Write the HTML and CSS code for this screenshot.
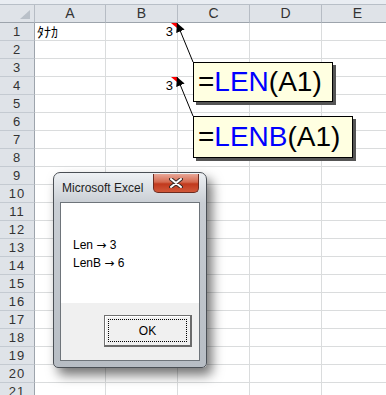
FILE: index.html
```html
<!DOCTYPE html>
<html lang="ja">
<head>
    <meta charset="UTF-8">
    <title>LEN / LENB</title>
    <link rel="stylesheet" href="styles.css">
</head>
<body>
    <div class="topbar"></div>

    <!-- Planilha -->
    <div class="sheet">
        <div class="hd corner"><span class="selall"></span></div>
        <div class="hd">A</div><div class="hd">B</div><div class="hd">C</div><div class="hd">D</div><div class="hd">E</div>

        <div class="rn">1</div><div class="c kana">ﾀﾅｶ</div><div class="c num note">3</div><div class="c"></div><div class="c"></div><div class="c"></div>
        <div class="rn">2</div><div class="c"></div><div class="c"></div><div class="c"></div><div class="c"></div><div class="c"></div>
        <div class="rn">3</div><div class="c"></div><div class="c"></div><div class="c"></div><div class="c"></div><div class="c"></div>
        <div class="rn">4</div><div class="c"></div><div class="c num note">3</div><div class="c"></div><div class="c"></div><div class="c"></div>
        <div class="rn">5</div><div class="c"></div><div class="c"></div><div class="c"></div><div class="c"></div><div class="c"></div>
        <div class="rn">6</div><div class="c"></div><div class="c"></div><div class="c"></div><div class="c"></div><div class="c"></div>
        <div class="rn">7</div><div class="c"></div><div class="c"></div><div class="c"></div><div class="c"></div><div class="c"></div>
        <div class="rn">8</div><div class="c"></div><div class="c"></div><div class="c"></div><div class="c"></div><div class="c"></div>
        <div class="rn">9</div><div class="c"></div><div class="c"></div><div class="c"></div><div class="c"></div><div class="c"></div>
        <div class="rn">10</div><div class="c"></div><div class="c"></div><div class="c"></div><div class="c"></div><div class="c"></div>
        <div class="rn">11</div><div class="c"></div><div class="c"></div><div class="c"></div><div class="c"></div><div class="c"></div>
        <div class="rn">12</div><div class="c"></div><div class="c"></div><div class="c"></div><div class="c"></div><div class="c"></div>
        <div class="rn">13</div><div class="c"></div><div class="c"></div><div class="c"></div><div class="c"></div><div class="c"></div>
        <div class="rn">14</div><div class="c"></div><div class="c"></div><div class="c"></div><div class="c"></div><div class="c"></div>
        <div class="rn">15</div><div class="c"></div><div class="c"></div><div class="c"></div><div class="c"></div><div class="c"></div>
        <div class="rn">16</div><div class="c"></div><div class="c"></div><div class="c"></div><div class="c"></div><div class="c"></div>
        <div class="rn">17</div><div class="c"></div><div class="c"></div><div class="c"></div><div class="c"></div><div class="c"></div>
        <div class="rn">18</div><div class="c"></div><div class="c"></div><div class="c"></div><div class="c"></div><div class="c"></div>
        <div class="rn">19</div><div class="c"></div><div class="c"></div><div class="c"></div><div class="c"></div><div class="c"></div>
        <div class="rn">20</div><div class="c"></div><div class="c"></div><div class="c"></div><div class="c"></div><div class="c"></div>
        <div class="rn">21</div><div class="c"></div><div class="c"></div><div class="c"></div><div class="c"></div><div class="c"></div>
    </div>

    <!-- Setas dos comentários -->
    <svg class="arrows" width="386" height="395">
        <defs>
            <marker id="head" viewBox="0 0 10 10" refX="10" refY="5" markerWidth="9" markerHeight="9" markerUnits="userSpaceOnUse" orient="auto">
                <path d="M0 0 L10 5 L0 10 z" fill="#000"/>
            </marker>
        </defs>
        <line x1="193" y1="62" x2="177" y2="23" stroke="#000" stroke-width="1" marker-end="url(#head)"/>
        <line x1="193" y1="116" x2="177" y2="77" stroke="#000" stroke-width="1" marker-end="url(#head)"/>
    </svg>

    <!-- Comentários -->
    <div class="comment c1"><span class="op">=</span><span class="fn">LEN</span><span class="op">(A1)</span></div>
    <div class="comment c2"><span class="op">=</span><span class="fn">LENB</span><span class="op">(A1)</span></div>

    <!-- Caixa de mensagem -->
    <div class="dialog">
        <div class="titlebar">
            <span class="title">Microsoft Excel</span>
            <span class="close">
                <svg width="14" height="10" viewBox="0 0 14 10">
                    <path d="M2 1 L12 9 M12 1 L2 9" stroke="#3a2a26" stroke-width="4" stroke-linecap="round"/>
                    <path d="M2 1 L12 9 M12 1 L2 9" stroke="#fff" stroke-width="2" stroke-linecap="round"/>
                </svg>
            </span>
        </div>
        <div class="client">
            <div class="msg">
                <p>Len <span class="arr">→</span> 3</p>
                <p>LenB <span class="arr">→</span> 6</p>
            </div>
            <div class="actions">
                <button class="okbtn"><span>OK</span></button>
            </div>
        </div>
    </div>
</body>
</html>
```

FILE: styles.css
```css
* {
    margin: 0;
    padding: 0;
    box-sizing: border-box;
}

body {
    width: 386px;
    height: 395px;
    overflow: hidden;
    position: relative;
    background: #fff;
    font-family: 'Liberation Sans', 'DejaVu Sans', 'Noto Sans CJK JP', sans-serif;
}

.topbar {
    height: 5px;
    background: #e9edf2;
    border-bottom: 1px solid #b8bfc7;
}

/* Planilha */
.sheet {
    display: grid;
    grid-template-columns: 35px 71px 72px 72px 72px 72px;
    grid-auto-rows: 18px;
}

.hd {
    background: #dfe3e8;
    border-right: 1px solid #b6bcc4;
    border-bottom: 1px solid #9da4ac;
    color: #333;
    font-size: 14px;
    text-align: center;
    line-height: 17px;
}

.corner {
    position: relative;
}

.selall {
    position: absolute;
    right: 4px;
    bottom: 3px;
    width: 0;
    height: 0;
    border-left: 10px solid transparent;
    border-bottom: 9px solid #b9c0c8;
}

.rn {
    background: #dfe3e8;
    border-right: 1px solid #9da4ac;
    border-bottom: 1px solid #c4cad1;
    color: #333;
    font-size: 13px;
    letter-spacing: 1px;
    text-align: center;
    line-height: 17px;
}

.c {
    border-right: 1px solid #dadcdd;
    border-bottom: 1px solid #dadcdd;
    font-size: 13px;
    line-height: 17px;
    padding: 0 3px;
}

.kana {
    font-family: 'Noto Sans CJK JP', sans-serif;
    font-size: 14px;
    padding-left: 2px;
}

.num {
    text-align: right;
    padding-right: 4px;
}

.note {
    position: relative;
}

.note::after {
    content: "";
    position: absolute;
    top: 0;
    right: 0;
    border-left: 6px solid transparent;
    border-top: 5px solid #f00;
}

.arrows {
    position: absolute;
    left: 0;
    top: 0;
}

/* Comentários */
.comment {
    position: absolute;
    left: 193px;
    background: #ffffe1;
    border: 1px solid #000;
    box-shadow: 3px 3px 0 #555;
    font-size: 28px;
    line-height: 38px;
    padding-left: 4px;
}

.c1 {
    top: 62px;
    width: 140px;
    height: 40px;
}

.c2 {
    top: 116px;
    width: 160px;
    height: 42px;
    line-height: 40px;
}

.fn {
    color: #0000ff;
}

.op {
    color: #000;
}

/* Caixa de mensagem */
.dialog {
    position: absolute;
    left: 53px;
    top: 172px;
    width: 154px;
    height: 196px;
    border: 1px solid #4a4f55;
    border-radius: 7px 7px 5px 5px;
    background: linear-gradient(#eef1f4, #c9ced4 30px, #b7bdc4);
    box-shadow: 5px 7px 12px rgba(0, 0, 0, 0.55);
    padding: 0 6px 6px 6px;
    display: flex;
    flex-direction: column;
}

.titlebar {
    height: 29px;
    display: flex;
    align-items: flex-start;
    justify-content: space-between;
}

.title {
    font-size: 12px;
    color: #1e1e1e;
    margin-top: 8px;
    margin-left: 2px;
}

.close {
    width: 46px;
    height: 19px;
    margin-top: 1px;
    margin-right: 1px;
    border: 1px solid #6b2b20;
    border-top: none;
    border-radius: 0 0 5px 5px;
    background: linear-gradient(#e9a797, #d4694f 45%, #c1391d 55%, #d1583a);
    display: flex;
    align-items: center;
    justify-content: center;
}

.client {
    flex: 1;
    border: 1px solid #6e747a;
    background: #f0f0f0;
    display: flex;
    flex-direction: column;
}

.msg {
    background: #fff;
    height: 100px;
    padding: 33px 0 0 12px;
    font-size: 12px;
    color: #000;
}

.msg p {
    line-height: 18px;
}

.arr {
    font-family: 'DejaVu Sans', sans-serif;
}

.actions {
    flex: 1;
    display: flex;
    justify-content: flex-end;
    padding: 12px 7px 0 0;
}

.okbtn {
    width: 88px;
    height: 32px;
    background: #f0f0f0;
    border: 1px solid #707070;
    border-right: 2px solid #6b6b6b;
    border-bottom: 2px solid #6b6b6b;
    box-shadow: inset 1px 1px 0 #fff;
    padding: 3px;
    font-family: 'Liberation Sans', sans-serif;
    font-size: 12px;
    color: #000;
}

.okbtn span {
    display: flex;
    height: 100%;
    align-items: center;
    justify-content: center;
    border: 1px dotted #000;
}
```
